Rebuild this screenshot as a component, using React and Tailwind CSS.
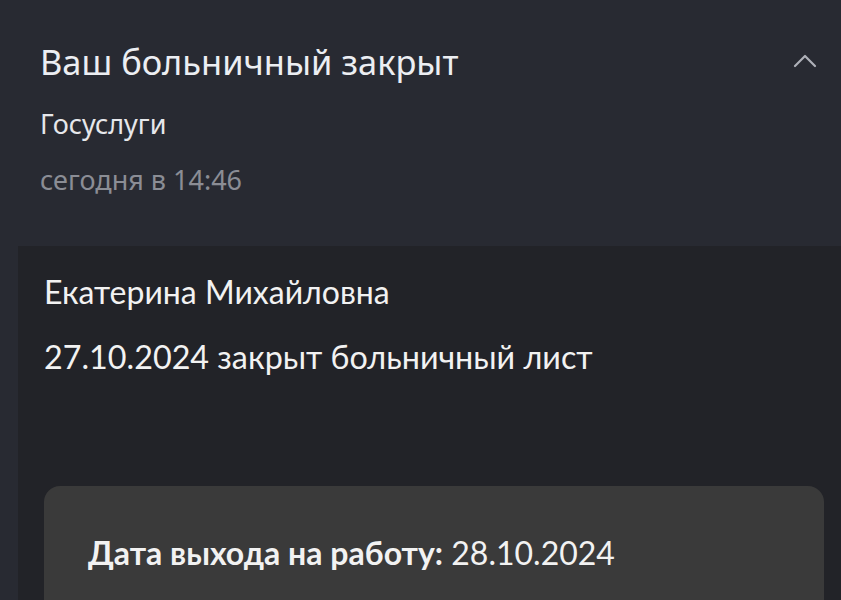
import React from "react";

function App() {
  return (
    <div className="h-[600px] w-[841px] overflow-hidden bg-[#282a32]">
      {/* Header */}
      <div className="relative pl-[40px] pt-[42px] font-['Noto_Sans',sans-serif]">
        <h1 className="text-[34.4px] leading-[40px] text-[#eceef2]">
          Ваш больничный закрыт
        </h1>
        <p className="mt-[27px] text-[27px] leading-[30px] text-[#e6e7eb]">Госуслуги</p>
        <p className="mt-[26px] text-[27px] leading-[30px] text-[#8b8d95]">сегодня в 14:46</p>

        <svg
          className="absolute right-[24px] top-[52px]"
          width="24"
          height="18"
          viewBox="0 0 24 18"
          fill="none"
        >
          <path d="M2 14 L12 4 L22 14" stroke="#aeb0b8" strokeWidth="2.2" strokeLinecap="round" strokeLinejoin="round" />
        </svg>
      </div>

      {/* Message body */}
      <div className="ml-[18px] mt-[51px] h-[400px] bg-[#222328] pl-[26px] pt-[28px] font-['Lato',sans-serif] text-[#f2f2f2]">
        <p className="text-[32px] leading-[36px]">Екатерина Михайловна</p>
        <p className="mt-[29px] text-[32.3px] leading-[36px]">27.10.2024 закрыт больничный лист</p>

        <div className="mt-[111px] mr-[17px] h-[200px] rounded-[16px] bg-[#3a3a3a] pl-[44px] pt-[49px]">
          <p className="text-[32px] leading-[36px]">
            <span className="font-bold">Дата выхода на работу:</span> 28.10.2024
          </p>
        </div>
      </div>
    </div>
  );
}

export default App;
